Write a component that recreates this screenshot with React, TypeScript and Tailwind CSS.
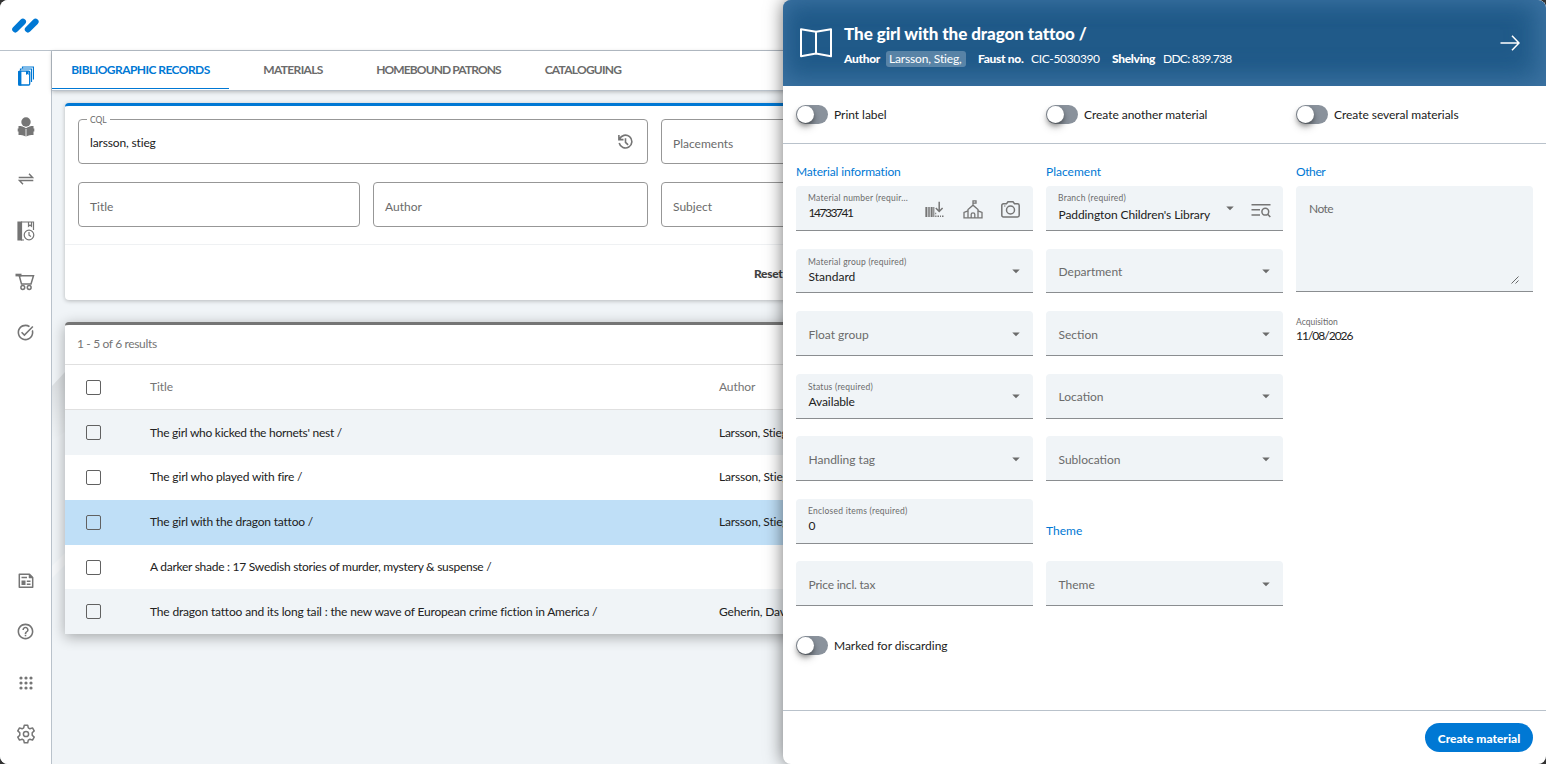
import type { ReactNode } from "react";
import { clsx } from "clsx";
import { MdArrowDropDown, MdHelpOutline, MdTaskAlt } from "react-icons/md";

interface FieldProps {
  label: string;
  value?: string;
  select?: boolean;
  className?: string;
  groupClass?: string;
  valueClass?: string;
  textClass?: string;
  arrowClass?: string;
  children?: ReactNode;
}

const TABS = [
  { label: "BIBLIOGRAPHIC RECORDS", className: "w-[177px] tracking-[-0.55px] text-[#0078d4] border-b border-[#0078d4]" },
  { label: "MATERIALS", className: "w-[128px] tracking-[-0.65px]" },
  { label: "HOMEBOUND PATRONS", className: "w-[163px] tracking-[-0.88px]" },
  { label: "CATALOGUING", className: "w-[126px] tracking-[-0.75px]" },
];

const ROWS = [
  { title: "The girl who kicked the hornets' nest /", author: "Larsson, Stieg,", bg: "bg-[#f0f4f7]", size: "h-[45px] tracking-[-0.26px]" },
  { title: "The girl who played with fire /", author: "Larsson, Stieg,", bg: "bg-white", size: "h-[45px] pb-px tracking-[-0.18px]" },
  { title: "The girl with the dragon tattoo /", author: "Larsson, Stieg,", bg: "bg-[#bfdff7]", size: "h-[45px] pb-px tracking-[-0.2px]" },
  { title: "A darker shade : 17 Swedish stories of murder, mystery & suspense /", author: "", bg: "bg-white", size: "h-[44px] tracking-[-0.27px]" },
  { title: "The dragon tattoo and its long tail : the new wave of European crime fiction in America /", author: "Geherin, David,", bg: "bg-[#f0f4f7]", size: "h-[45px] tracking-[-0.17px]" },
];

function RecordsIcon() {
  return (
    <svg width="16" height="20" viewBox="0 0 16 20" fill="none" stroke="currentColor">
      <path d="M4.500 2.500V1h11v12.500" strokeWidth="1.200" />
      <path d="M2.500 4.500V3h11v13" strokeWidth="1.200" />
      <rect x=".7" y="5.200" width="11" height="13.800" rx="1" strokeWidth="1.300" />
      <path d="M.2 5h3.200v14.500H.2z" fill="currentColor" stroke="none" />
      <path d="M8 5v4l1.300-1 1.300 1V5z" fill="currentColor" stroke="none" />
    </svg>
  );
}

function ReaderIcon() {
  return (
    <svg width="18" height="20" viewBox="0 0 18 20" fill="currentColor">
      <circle cx="9" cy="5" r="4.700" />
      <path d="M1.500 9c2.800 0 5.400.6 7.500 2.200C11.100 9.600 13.700 9 16.500 9v2.500h.8v3h-.8V18c-2.700 0-5 .3-7.100 1.500V12h-.8v7.500C6.500 18.300 4.200 18 1.500 18v-3.500H.7v-3h.8z" />
    </svg>
  );
}

function ExchangeIcon() {
  return (
    <svg width="16" height="12" viewBox="0 0 16 12" fill="none" stroke="currentColor" strokeWidth="1.400">
      <path d="M.7 4.500h13.800L11 .8M15.300 7.500H1.500L5 11.200" />
    </svg>
  );
}

function BookClockIcon() {
  return (
    <svg width="18" height="20" viewBox="0 0 18 20" fill="none" stroke="currentColor" strokeWidth="1.200">
      <path d="M1 1h3.500v18H1z" fill="currentColor" />
      <path d="M4 1h12.500v8M4 19h3M11.500 1v4.200L13 4l1.500 1.200V1" />
      <circle cx="12" cy="14" r="4.800" />
      <path d="M12 11v3.200l2 1.400" />
    </svg>
  );
}

function CartIcon() {
  return (
    <svg width="20" height="18" viewBox="0 0 20 18" fill="none" stroke="currentColor" strokeWidth="1.500">
      <path d="M.5.7h6V3.400h-6z" fill="currentColor" stroke="none" />
      <path d="M4.500 2.800h14L16 11H6.500L4.200 2.500" />
      <circle cx="7.800" cy="14.500" r="1.900" />
      <circle cx="14.200" cy="14.500" r="1.900" />
    </svg>
  );
}

function NewsIcon() {
  return (
    <svg width="16" height="16" viewBox="0 0 16 16" fill="none" stroke="currentColor" strokeWidth="1.500">
      <path d="M2 1.200h9.500l3.200 3.300v9.700H1.300V1.200z" strokeLinejoin="round" />
      <path d="M11 1v4h4z" fill="currentColor" strokeWidth=".5" />
      <path d="M3.500 4.600h5.500M8.800 8.300h3.700M8.800 11.300h3.700" />
      <path d="M3.500 7.500h4V12h-4z" fill="currentColor" stroke="none" />
    </svg>
  );
}

function AppsIcon() {
  return (
    <svg width="14" height="14" viewBox="0 0 14 14" fill="currentColor">
      {[2, 7, 12].map((y) => [2, 7, 12].map((x) => <circle key={`${x}-${y}`} cx={x} cy={y} r="1.600" />))}
    </svg>
  );
}

function GearIcon() {
  return (
    <svg width="18" height="20" viewBox="0 0 18 20" fill="none" stroke="currentColor" strokeWidth="1.500" strokeLinejoin="round">
      <path d="M7.300 1.200h3.400l.6 2.600 1.600 1 2.600-.9 1.700 3-2 1.900v2.400l2 1.900-1.700 3-2.600-.9-1.600 1-.6 2.600H7.300l-.6-2.600-1.600-1-2.600.9-1.700-3 2-1.900V8.800l-2-1.900 1.700-3 2.600.9 1.600-1z" />
      <circle cx="9" cy="10" r="2.600" />
    </svg>
  );
}

function HistoryIcon() {
  return (
    <svg width="15" height="16" viewBox="0 0 15 16" fill="none" stroke="#757575" strokeWidth="1.600">
      <path d="M.9 1v4.600h4.600M1.500 5.200A6.400 6.400 0 1 1 1.200 9" />
      <path d="M7.500 4.300v4l2.600 2.600" />
    </svg>
  );
}

function BarcodeIcon() {
  return (
    <svg width="19" height="17" viewBox="0 0 19 17" fill="none" stroke="#757575" className="mr-px">
      <path d="M1.200 6v10M6.800 6v10" strokeWidth="1.700" />
      <path d="M3.200 6v10M4.800 6v10M8.800 6v10" strokeWidth="1.100" />
      <path d="M10.200 15.200h1.300M12.500 15.200H14M15 15.200h1M17 15.200h1.500M10.200 12.500h1" strokeWidth="1.600" />
      <path d="M14.200.8v9.500M10.800 7l3.400 3.500L17.600 7" strokeWidth="1.500" />
    </svg>
  );
}

function BranchIcon() {
  return (
    <svg width="20" height="19" viewBox="0 0 20 19" fill="none" stroke="#757575" strokeWidth="1.300">
      <path d="M5 17.800V9.500l5-4.300 5 4.300v8.300M10 5V.8h3v2.400h-3" />
      <path d="M5 10.800 1 12.500v5.300h18v-5.300l-4-1.700M8.200 17.800v-3.500c0-2 3.600-2 3.600 0v3.500" />
    </svg>
  );
}

function CameraIcon() {
  return (
    <svg width="19" height="17" viewBox="0 0 19 17" fill="none" stroke="#757575" strokeWidth="1.500">
      <path d="M2.500 2.800h3L7 .8h5l1.500 2h3q1.700 0 1.700 1.700v9.800q0 1.700-1.700 1.700h-14Q.8 16 .8 14.300V4.500q0-1.700 1.700-1.700z" />
      <circle cx="9.500" cy="9" r="4" />
      <path d="M3 5h1.500" strokeWidth="1.200" />
    </svg>
  );
}

function ListSearchIcon() {
  return (
    <svg width="20" height="15" viewBox="0 0 20 15" fill="none" stroke="#757575" strokeWidth="1.500">
      <path d="M.5 1.700h19M.5 6.700H9M.5 12H9" />
      <circle cx="14.300" cy="8.700" r="3.400" />
      <path d="M16.700 11.200 19.300 14" />
    </svg>
  );
}

function BookIcon() {
  return (
    <svg width="32" height="30" viewBox="0 0 32 30" fill="none" stroke="white" strokeWidth="2" strokeLinejoin="round">
      <path d="M16 3.800 1 1.200v27l15-2.700 15 2.700v-27zM16 4v21.500" />
    </svg>
  );
}

function Switch({ label }: { label: string }) {
  return (
    <div className="flex items-center gap-[6px]">
      <div className="flex h-[19px] w-8 items-center rounded-full bg-[#8a929c] pl-px">
        <div className="size-[17px] rounded-full bg-white shadow-[0_3px_5px_rgba(0,0,0,0.35),0_5px_9px_rgba(0,0,0,0.18)]" />
      </div>
      <span className="whitespace-nowrap text-[12px] tracking-[-0.04px] text-[#212121]">{label}</span>
    </div>
  );
}

function Field({ label, value, select, className, groupClass, valueClass, textClass, arrowClass, children }: FieldProps) {
  return (
    <div className={clsx("flex w-[237px] items-center rounded-t bg-[#f0f4f7] border-b border-[#8a8d90] pl-3 pr-2", className ?? "h-[45px]")}>
      {value ? (
        <div className={clsx("flex min-w-0 flex-1 flex-col", groupClass)}>
          <span className="whitespace-nowrap text-[8.500px] leading-[12px] tracking-[0.24px] text-[#6b6b6b]">{label}</span>
          <span className={clsx("whitespace-nowrap pl-[0.5px] text-[12px] leading-[17px] text-[#212121]", valueClass)}>{value}</span>
        </div>
      ) : (
        <span className={clsx("flex-1 whitespace-nowrap pl-[0.5px] text-[12px] text-[#6b6b6b]", textClass ?? "pt-1")}>{label}</span>
      )}
      {select && <MdArrowDropDown size={18} className={clsx("shrink-0 text-[#6b6b6b]", arrowClass ?? "mt-px")} />}
      {children}
    </div>
  );
}

function OutlinedField({ label, className }: { label: string; className: string }) {
  return (
    <div className={clsx("flex h-[45px] items-center rounded-[4px] border border-[#979797] pl-[11px] pt-1 text-[12px] text-[#6b6b6b]", className)}>
      <span>{label}</span>
    </div>
  );
}

function Checkbox() {
  return <div className="size-[15px] shrink-0 rounded-[2px] border border-[#616161]" />;
}

function Sidebar() {
  return (
    <aside className="flex w-[52px] shrink-0 flex-col justify-between border-r border-[#b9c2cb] bg-white pb-[5px] text-[#757575]">
      <div className="flex flex-col">
        <div className="flex h-[50px] items-center justify-center text-[#0078d4]"><RecordsIcon /></div>
        <div className="flex h-[52px] items-center justify-center"><ReaderIcon /></div>
        <div className="flex h-[52px] items-center justify-center"><ExchangeIcon /></div>
        <div className="flex h-[51px] items-center justify-center"><BookClockIcon /></div>
        <div className="flex h-[51px] items-center justify-center pr-px"><CartIcon /></div>
        <div className="flex h-[51px] items-center justify-center"><MdTaskAlt size={19} /></div>
      </div>
      <div className="flex flex-col">
        <div className="flex h-[51px] items-center justify-center"><NewsIcon /></div>
        <div className="flex h-[51px] items-center justify-center"><MdHelpOutline size={19} /></div>
        <div className="flex h-[52px] items-center justify-center"><AppsIcon /></div>
        <div className="flex h-[50px] items-center justify-center"><GearIcon /></div>
      </div>
    </aside>
  );
}

function SearchCard() {
  return (
    <section className="h-[197px] rounded border-t-[3px] border-[#0078d4] bg-white shadow-[0_1px_4px_rgba(0,0,0,0.25)]">
      <div className="flex h-[139px] flex-col gap-[18px] border-b border-[#eff1f3] pl-[13px] pt-[13px]">
        <div className="flex gap-[13px]">
          <div className="relative flex h-[45px] w-[570px] items-center justify-between rounded-[4px] border border-[#979797] pl-[11px] pr-[14px]">
            <span className="absolute -top-[7px] left-2 bg-white px-[3px] text-[8.500px] leading-[14px] text-[#6b6b6b]">CQL</span>
            <span className="pt-0.5 text-[12px] tracking-[-0.15px] text-[#212121]">larsson, stieg</span>
            <HistoryIcon />
          </div>
          <OutlinedField label="Placements" className="w-[282px]" />
        </div>
        <div className="flex gap-[13px]">
          <OutlinedField label="Title" className="w-[282px]" />
          <OutlinedField label="Author" className="w-[275px]" />
          <OutlinedField label="Subject" className="w-[282px]" />
        </div>
      </div>
      <div className="flex h-[57px] items-center pl-[689px]">
        <span className="text-[12px] font-black tracking-[-0.3px] text-[#424242]">Reset</span>
      </div>
    </section>
  );
}

function ResultsCard() {
  return (
    <section className="overflow-hidden rounded-t border-t-[3px] border-[#757575] bg-white shadow-[0_3px_14px_rgba(0,0,0,0.32)]">
      <div className="flex h-10 items-center border-b border-[#e0e0e0] pb-px pl-3 text-[12px] tracking-[-0.35px] text-[#757575]">1 - 5 of 6 results</div>
      <div className="flex h-[45px] items-center border-b border-[#e0e0e0] pl-[21px] text-[12px] tracking-[-0.1px] text-[#757575]">
        <Checkbox />
        <span className="w-[569px] pl-[49px]">Title</span>
        <span className="pl-[49px]">Author</span>
      </div>
      {ROWS.map((row) => (
        <div key={row.title} className={clsx("flex items-center pl-[21px] text-[12px] text-[#212121]", row.bg, row.size)}>
          <Checkbox />
          <span className="w-[618px] whitespace-nowrap pl-[49px]">{row.title}</span>
          <span className="whitespace-nowrap">{row.author}</span>
        </div>
      ))}
    </section>
  );
}

function MaterialPanel() {
  return (
    <div className="absolute inset-y-0 right-0 flex w-[763px] flex-col overflow-hidden rounded-lg bg-white shadow-[0_0_18px_rgba(0,0,0,0.55)]">
      <header className="flex h-[86px] shrink-0 items-center bg-[#205a89] pl-[17px] pr-[26px] text-white shadow-[inset_0_0_24px_#3d73a3,inset_-10px_-6px_30px_rgba(75,130,175,0.45)]">
        <BookIcon />
        <div className="flex flex-1 flex-col gap-[7px] pl-3 pt-1">
          <h1 className="text-[17px] font-black leading-5 tracking-[-0.06px]">The girl with the dragon tattoo /</h1>
          <div className="flex items-center whitespace-nowrap text-[12px] leading-4">
            <span className="w-[42px] font-black tracking-[-0.3px]">Author</span>
            <span className="w-20 rounded-[3px] bg-white/25 px-[3px] tracking-[-0.15px]">Larsson, Stieg,</span>
            <span className="ml-3 w-[53px] font-black tracking-[-0.3px]">Faust no.</span>
            <span className="w-[81px] tracking-[-0.35px]">CIC-5030390</span>
            <span className="w-[51px] font-black tracking-[-0.3px]">Shelving</span>
            <span className="tracking-[-0.7px]">DDC: 839.738</span>
          </div>
        </div>
        <svg width="20" height="16" viewBox="0 0 20 16" fill="none" stroke="white" strokeWidth="1.500">
          <path d="M.5 8h18M12 .8 19 8l-7 7.200" />
        </svg>
      </header>
      <div className="grid h-[58px] shrink-0 grid-cols-[237px_237px_237px] items-center gap-[13px] border-b border-[#b9c2cb] px-[13px]">
        <Switch label="Print label" />
        <Switch label="Create another material" />
        <Switch label="Create several materials" />
      </div>
      <div className="grid flex-1 grid-cols-[237px_237px_237px] gap-[13px] px-[13px] pt-[19px]">
        <div className="flex flex-col">
          <h2 className="h-[23px] text-[12px] leading-[18px] tracking-[-0.15px] text-[#0078d4]">Material information</h2>
          <div className="flex flex-col gap-[17.500px]">
            <Field label="Material number (requir..." value="14733741" groupClass="pb-1" valueClass="tracking-[-1.45px]">
              <div className="flex items-center gap-[18px] pr-[5px] pt-[2px]">
                <BarcodeIcon />
                <BranchIcon />
                <CameraIcon />
              </div>
            </Field>
            <Field label="Material group (required)" value="Standard" select className="mb-[0.250px] h-[44.800px]" />
            <Field label="Float group" select arrowClass="mt-0.5" />
            <Field label="Status (required)" value="Available" select valueClass="tracking-[-0.1px]" />
            <Field label="Handling tag" select arrowClass="mt-0.5" />
            <Field label="Enclosed items (required)" value="0" groupClass="pb-[2px]" />
            <Field label="Price incl. tax" textClass="pt-1 tracking-[-0.2px]" />
          </div>
          <div className="pt-[30px]">
            <Switch label="Marked for discarding" />
          </div>
        </div>
        <div className="flex flex-col">
          <h2 className="h-[23px] text-[12px] leading-[18px] text-[#0078d4]">Placement</h2>
          <div className="flex flex-col gap-[17.500px]">
            <Field label="Branch (required)" value="Paddington Children's Library" select groupClass="pb-px" valueClass="pt-0.5 tracking-[-0.1px]" arrowClass="mb-px">
              <div className="pl-3 pr-[4px] pt-1">
                <ListSearchIcon />
              </div>
            </Field>
            <Field label="Department" select className="mb-[0.250px] h-[44.800px]" textClass="pt-[3px]" />
            <Field label="Section" select arrowClass="mt-0.5" />
            <Field label="Location" select textClass="pt-[3px]" />
            <Field label="Sublocation" select arrowClass="mt-0.5" />
            <h2 className="flex h-[45px] items-end pb-1 text-[12px] text-[#0078d4]">Theme</h2>
            <Field label="Theme" select arrowClass="mt-0.5" />
          </div>
        </div>
        <div className="flex flex-col">
          <h2 className="h-[23px] text-[12px] leading-[18px] tracking-[-0.4px] text-[#0078d4]">Other</h2>
          <div className="flex h-[106px] items-end justify-between rounded-t border-b border-[#8a8d90] bg-[#f0f4f7] pl-[13px] pr-[14px]">
            <span className="h-[91px] text-[12px] tracking-[-0.6px] text-[#6b6b6b]">Note</span>
            <svg width="8" height="8" viewBox="0 0 8 8" stroke="#444" strokeWidth="0.800" className="mb-[7px]">
              <path d="M.5 7.500l7-7M4.500 7.500l3-3" />
            </svg>
          </div>
          <span className="pt-6 text-[8.500px] leading-3 text-[#6b6b6b]">Acquisition</span>
          <span className="text-[12px] leading-4 tracking-[-1px] text-[#212121]">11/08/2026</span>
        </div>
      </div>
      <footer className="flex h-[54px] shrink-0 items-center justify-end border-t border-[#b9c2cb] pr-[13px]">
        <button className="h-[29px] w-[108px] rounded-full bg-[#0078d4] pt-0.5 text-[12px] font-black text-white">Create material</button>
      </footer>
    </div>
  );
}

export default function App() {
  return (
    <div className="h-[764px] w-[1546px] bg-[#333] font-['Lato',sans-serif]">
      <div className="relative flex h-full flex-col overflow-hidden rounded-lg bg-[#f0f4f7]">
        <header className="flex h-[51px] shrink-0 items-center border-b border-[#b9c2cb] bg-white pl-3">
          <svg width="28" height="16" viewBox="0 0 28 16" stroke="#0078d4" strokeWidth="6.200" strokeLinecap="round">
            <path d="M3.300 12.400l7.600-7.700M15.900 12.400l7.600-7.700" />
          </svg>
        </header>
        <div className="flex min-h-0 flex-1">
          <Sidebar />
          <main className="relative flex min-w-0 flex-1 flex-col">
            <svg className="absolute left-0 top-0" width="13" height="583" viewBox="0 0 13 583" aria-hidden="true">
              <defs>
                <linearGradient id="fold" x1="0" y1="0" x2="0" y2="1">
                  <stop offset="0.150" stopColor="#000" stopOpacity="0.080" />
                  <stop offset="1" stopColor="#000" stopOpacity="0" />
                </linearGradient>
              </defs>
              <path d="M0 335 13 321v60L0 390z" fill="url(#fold)" />
              <path d="M0 515 13 502v12L0 527z" fill="#fff" fillOpacity="0.400" />
            </svg>
            <nav className="relative flex h-10 shrink-0 border-b border-[#b9c2cb] bg-white text-[12px] font-bold text-[#6b6b6b] shadow-[0_1px_4px_rgba(0,0,0,0.25)]">
              {TABS.map((tab) => (
                <div key={tab.label} className={clsx("flex h-[38px] items-center justify-center whitespace-nowrap", tab.className)}>{tab.label}</div>
              ))}
            </nav>
            <div className="relative flex flex-col gap-[22px] px-[13px] pt-3">
              <SearchCard />
              <ResultsCard />
            </div>
          </main>
        </div>
        <MaterialPanel />
      </div>
    </div>
  );
}
